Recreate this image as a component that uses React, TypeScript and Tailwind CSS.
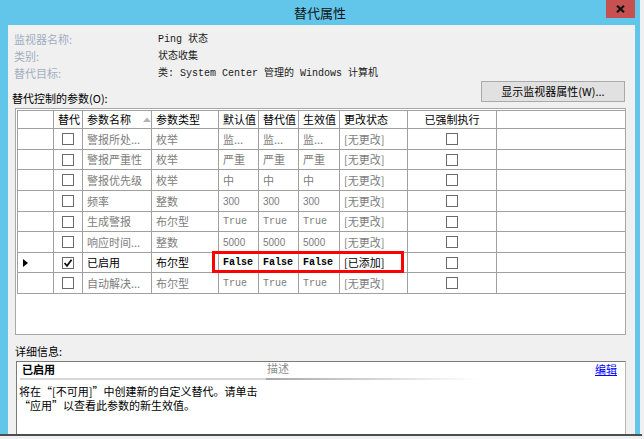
import React from 'react';

const W = ['w-[37px]', 'w-[29px]', 'w-[69px]', 'w-[67px]', 'w-[40px]', 'w-[40px]', 'w-[41px]', 'w-[68px]', 'w-[89px]'];

type Row = {
  name: string;
  type: string;
  vals: string[];
  kind: 'cjk' | 'num' | 'bool';
  status: string;
  sel?: boolean;
  h: string;
};

const rows: Row[] = [
  { name: '警报所处...', type: '枚举', vals: ['监...', '监...', '监...'], kind: 'cjk', status: '[无更改]', h: 'h-[21px]' },
  { name: '警报严重性', type: '枚举', vals: ['严重', '严重', '严重'], kind: 'cjk', status: '[无更改]', h: 'h-[20px]' },
  { name: '警报优先级', type: '枚举', vals: ['中', '中', '中'], kind: 'cjk', status: '[无更改]', h: 'h-[21px]' },
  { name: '频率', type: '整数', vals: ['300', '300', '300'], kind: 'num', status: '[无更改]', h: 'h-[21px]' },
  { name: '生成警报', type: '布尔型', vals: ['True', 'True', 'True'], kind: 'bool', status: '[无更改]', h: 'h-[20px]' },
  { name: '响应时间...', type: '整数', vals: ['5000', '5000', '5000'], kind: 'num', status: '[无更改]', h: 'h-[21px]' },
  { name: '已启用', type: '布尔型', vals: ['False', 'False', 'False'], kind: 'bool', status: '[已添加]', sel: true, h: 'h-[20px]' },
  { name: '自动解决...', type: '布尔型', vals: ['True', 'True', 'True'], kind: 'bool', status: '[无更改]', h: 'h-[21px]' },
];

function Box({ checked }: { checked?: boolean }) {
  return (
    <div className="w-[12px] h-[12px] border border-[#6a6a6a] bg-white flex items-center justify-center">
      {checked && (
        <svg width="10" height="10" viewBox="0 0 10 10">
          <path d="M1.5 5 L4 7.8 L8.6 1.8" stroke="#111" strokeWidth="1.8" fill="none" />
        </svg>
      )}
    </div>
  );
}

function Cell({ i, children, center, className = '' }: { i: number; children?: React.ReactNode; center?: boolean; className?: string }) {
  return (
    <div
      className={`${W[i]} h-full shrink-0 border-r border-[#a0a0a0] ${i === 0 ? 'border-l' : ''} flex items-center ${center ? 'justify-center' : 'pl-[4px]'} overflow-hidden whitespace-nowrap ${className}`}
    >
      {children}
    </div>
  );
}

function Q({ c }: { c: string }) {
  return <span className="[font-feature-settings:'fwid']">{c}</span>;
}

export default function App() {
  return (
    <div lang="zh-CN" className="w-[644px] h-[439px] bg-[#eef0f2] overflow-hidden font-['Noto_Sans_CJK_SC',sans-serif] text-[11px] leading-[13px] text-black">
      <div className="w-[640px] h-[434px] bg-[#62c6ea] flex flex-col">
        {/* title bar */}
        <div className="h-[25px] shrink-0 grid grid-cols-[1fr_auto_1fr] items-start">
          <div />
          <div className="text-[13px] leading-[16px] pt-[5px] text-[#111]">替代属性</div>
          <div className="flex justify-end pr-[5px]">
            <div className="w-[29px] h-[18px] bg-[#c75050] flex items-center justify-center">
              <svg width="9" height="8" viewBox="0 0 9 8">
                <path d="M1 0.8 L8 7.2 M8 0.8 L1 7.2" stroke="#111" strokeWidth="2.2" />
              </svg>
            </div>
          </div>
        </div>
        {/* content */}
        <div className="flex-1 ml-[8px] mr-[5px] bg-[#f0f0f0] flex flex-col min-h-0">
          {/* info */}
          <div className="pt-[6px] pl-[6px] flex flex-col">
            {[
              ['监视器名称:', 'Ping 状态'],
              ['类别:', '状态收集'],
              ['替代目标:', '类: System Center 管理的 Windows 计算机'],
            ].map(([k, v]) => (
              <div key={k} className="h-[17px] flex items-center">
                <div className="w-[144px] text-[#a3aec0]">{k}</div>
                <div className="text-[#1a1a1a] font-['Liberation_Mono','Noto_Sans_CJK_SC',monospace] text-[10px]">{v}</div>
              </div>
            ))}
          </div>
          {/* label + button */}
          <div className="mt-[-1px] h-[24px] flex items-end justify-between pl-[4px] pr-[10px]">
            <div>替代控制的参数(O):</div>
            <div className="mb-[3px] w-[144px] h-[21px] bg-[#e1e1e1] border border-[#a9a9a9] flex items-center justify-center">
              显示监视器属性(W)...
            </div>
          </div>
          {/* grid */}
          <div className="relative mt-[3px] ml-[7px] mr-[9px] h-[227px] shrink-0 bg-white border border-[#a8a8a8] pt-[1px] pl-[1px]">
            {/* header */}
            <div className="flex h-[19px] border-t border-b border-[#a0a0a0]">
              <Cell i={0} />
              <Cell i={1}>替代</Cell>
              <Cell i={2}>
                <span>参数名称</span>
                <svg className="ml-[12px]" width="8" height="5" viewBox="0 0 8 5">
                  <path d="M0 5 L4 0.5 L8 5 Z" fill="#b4b4b4" />
                </svg>
              </Cell>
              <Cell i={3}>参数类型</Cell>
              <Cell i={4}>默认值</Cell>
              <Cell i={5}>替代值</Cell>
              <Cell i={6}>生效值</Cell>
              <Cell i={7}>更改状态</Cell>
              <Cell i={8} center>已强制执行</Cell>
            </div>
            {rows.map((r) => {
              const col = r.sel ? 'text-black' : 'text-[#7d7d7d]';
              const valCls =
                r.kind === 'bool'
                  ? `font-['Liberation_Mono',monospace] text-[10px] ${r.sel ? 'font-bold' : ''}`
                  : r.kind === 'num'
                  ? "font-['Liberation_Sans',sans-serif] text-[10px]"
                  : '';
              return (
                <div key={r.name} className={`flex ${r.h} border-b border-[#a0a0a0] ${col}`}>
                  <Cell i={0}>
                    {r.sel && (
                      <svg width="5" height="8" viewBox="0 0 5 8" className="ml-[1px]">
                        <path d="M0 0 L5 4 L0 8 Z" fill="#000" />
                      </svg>
                    )}
                  </Cell>
                  <Cell i={1} center>
                    <Box checked={r.sel} />
                  </Cell>
                  <Cell i={2}>{r.name}</Cell>
                  <Cell i={3}>{r.type}</Cell>
                  <Cell i={4} className={valCls}>{r.vals[0]}</Cell>
                  <Cell i={5} className={valCls}>{r.vals[1]}</Cell>
                  <Cell i={6} className={valCls}>{r.vals[2]}</Cell>
                  <Cell i={7}>{r.status}</Cell>
                  <Cell i={8} center>
                    <Box />
                  </Cell>
                </div>
              );
            })}
            {/* red annotation */}
            <div className="absolute left-[196px] top-[142px] w-[192px] h-[22px] border-[3px] border-[#ff0000] pointer-events-none" />
          </div>
          {/* details */}
          <div className="mt-[10px] pl-[7px]">详细信息:</div>
          <div className="mt-[3px] ml-[8px] mr-[9px] flex-1 bg-white border-t border-l border-r border-t-[#7a7a7a] border-l-[#7a7a7a] border-r-[#b4b4b4] flex flex-col">
            <div className="flex items-start pt-[1px] h-[15px]">
              <div className="w-[250px] pl-[5px] font-bold">已启用</div>
              <div className="flex-1 text-[#8c8c8c] mt-[-1px]">描述</div>
              <div className="pr-[8px] text-[#0000ff] underline">编辑</div>
            </div>
            <div className="flex ml-[3px] mt-[1px]">
              <div className="w-[246px] h-[2px] bg-[#d6d6d6]" />
              <div className="w-[212px] h-[2px] bg-gradient-to-r from-[#a8a8a8] to-transparent" />
            </div>
            <div className="pl-[2px] pt-[4px] leading-[14px]">
              <div>
                将在<Q c="“" />[不可用]<Q c="”" />中创建新的自定义替代。请单击
              </div>
              <div>
                <Q c="“" />应用<Q c="”" />以查看此参数的新生效值。
              </div>
            </div>
          </div>
        </div>
      </div>
      <div className="w-[642px] h-[2px] bg-[#4d4d4d]" />
    </div>
  );
}
